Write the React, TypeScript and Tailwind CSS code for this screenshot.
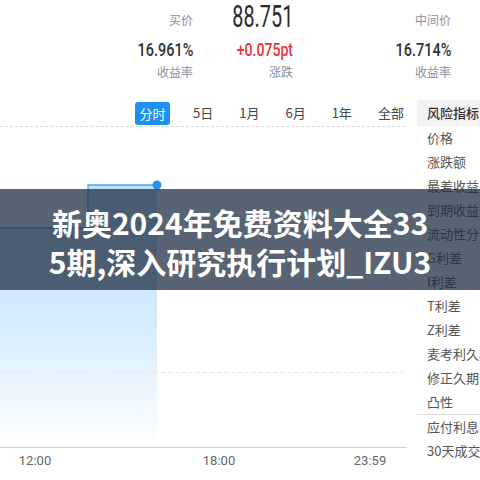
import React from 'react';

const cjk = "font-['Noto_Sans_CJK_SC',sans-serif]";
const num = "font-['Roboto','Noto_Sans_CJK_SC',sans-serif]";

const riskItems = [
  '价格',
  '涨跌额',
  '最差收益率',
  '到期收益率',
  '流动性分位数',
  'G利差',
  'I利差',
  'T利差',
  'Z利差',
  '麦考利久期',
  '修正久期',
  '凸性',
];

const tabs = ['5日', '1月', '6月', '1年', '全部'];

function Chart() {
  return (
    <svg width="407" height="345" viewBox="0 0 407 345" className="block">
      <defs>
        <linearGradient id="fillGrad" x1="0" y1="58" x2="0" y2="320" gradientUnits="userSpaceOnUse">
          <stop offset="0" stopColor="#bfe0fa" />
          <stop offset="0.55" stopColor="#d6ecfd" />
          <stop offset="1" stopColor="#ffffff" />
        </linearGradient>
      </defs>
      <path d="M0 101 H88 V58 H157 V320 H0 Z" fill="url(#fillGrad)" />
      <line x1="0" y1="115.5" x2="405" y2="115.5" stroke="#dcdcdc" strokeDasharray="4 3" />
      <line x1="0" y1="245.5" x2="405" y2="245.5" stroke="#e6e6e6" strokeDasharray="4 3" />
      <path d="M0 101 H88 V58 H157" fill="none" stroke="#4fa4ee" strokeWidth="1.3" />
      <circle cx="157" cy="58" r="4.5" fill="#2b8ef0" />
      <line x1="0" y1="320.5" x2="407" y2="320.5" stroke="#cfcfcf" />
      <g fontFamily="Roboto, 'Noto Sans CJK SC', sans-serif" fontSize="13" fill="#666">
        <text x="35" y="337.5" textAnchor="middle">12:00</text>
        <text x="219" y="337.5" textAnchor="middle">18:00</text>
        <text x="370" y="337.5" textAnchor="middle">23:59</text>
      </g>
    </svg>
  );
}

export default function App() {
  return (
    <div className="relative w-[480px] h-[480px] overflow-hidden bg-white">
      {/* quote header */}
      <div className="h-[100px]">
        <div className="flex h-[34px]">
          <div className={`w-[193px] flex justify-end pt-[7px] text-[12px] leading-[26px] text-[#8a8f99] ${cjk}`}>
            买价
          </div>
          <div className="w-[100px] flex justify-end">
            <span className={`inline-block origin-right scale-x-[0.64] text-[31px] leading-[34px] text-[#2b2b2b] ${num}`}>
              88.751
            </span>
          </div>
          <div className={`w-[158px] flex justify-end pt-[7px] text-[12px] leading-[26px] text-[#8a8f99] ${cjk}`}>
            中间价
          </div>
        </div>
        <div className="flex h-[31px]">
          <div className="w-[193px] flex justify-end">
            <span className={`inline-block origin-right scale-x-[0.76] text-[19px] leading-[31px] font-medium text-[#333] ${num}`}>
              16.961%
            </span>
          </div>
          <div className="w-[100px] flex justify-end">
            <span className={`inline-block origin-right scale-x-[0.74] text-[19px] leading-[31px] font-medium text-[#e5353b] ${num}`}>
              +0.075pt
            </span>
          </div>
          <div className="w-[158px] flex justify-end">
            <span className={`inline-block origin-right scale-x-[0.76] text-[19px] leading-[31px] font-medium text-[#333] ${num}`}>
              16.714%
            </span>
          </div>
        </div>
        <div className={`flex h-[14px] text-[12px] leading-[14px] text-[#8a8f99] ${cjk}`}>
          <div className="w-[193px] text-right">收益率</div>
          <div className="w-[100px] text-right">涨跌</div>
          <div className="w-[158px] text-right">收益率</div>
        </div>
      </div>

      {/* chart + risk menu */}
      <div className="flex">
        <div className="w-[407px] shrink-0">
          <div className="h-[27px] flex items-center pl-[135px] border-b border-dashed border-[#d8d8d8] mr-[2px]">
            <button className={`w-[35px] h-[23px] rounded-[3px] bg-[#1e90f5] text-white text-[13px] leading-[23px] ${cjk}`}>
              分时
            </button>
            <div className={`ml-[23px] flex gap-[26px] text-[13px] text-[#444] ${cjk}`}>
              {tabs.map((t) => (
                <span key={t}>{t}</span>
              ))}
            </div>
          </div>
          <Chart />
        </div>

        <div className={`ml-[10px] flex-1 text-[13px] text-[#555] whitespace-nowrap overflow-hidden ${cjk}`}>
          <div className="h-[26px] pl-[10px] bg-[#f3f3f3] font-medium text-[#333] leading-[26px]">风险指标</div>
          {riskItems.map((item) => (
            <div key={item} className="h-[24px] pl-[10px] leading-[24px]">
              {item}
            </div>
          ))}
          <div className="border-t border-[#dedede]">
            <div className="h-[24px] pl-[10px] leading-[24px]">应付利息</div>
            <div className="h-[24px] pl-[10px] leading-[24px]">30天成交量</div>
          </div>
        </div>
      </div>

      {/* title banner */}
      <div className="absolute left-0 right-0 top-[189px] h-[101px] bg-[rgba(30,45,66,0.74)] pt-[14px]">
        <div className={`text-center text-white font-bold text-[30px] leading-[39px] whitespace-nowrap ${cjk}`}>
          <div>新奥2024年免费资料大全33</div>
          <div>5期,深入研究执行计划_IZU3</div>
        </div>
      </div>
    </div>
  );
}
